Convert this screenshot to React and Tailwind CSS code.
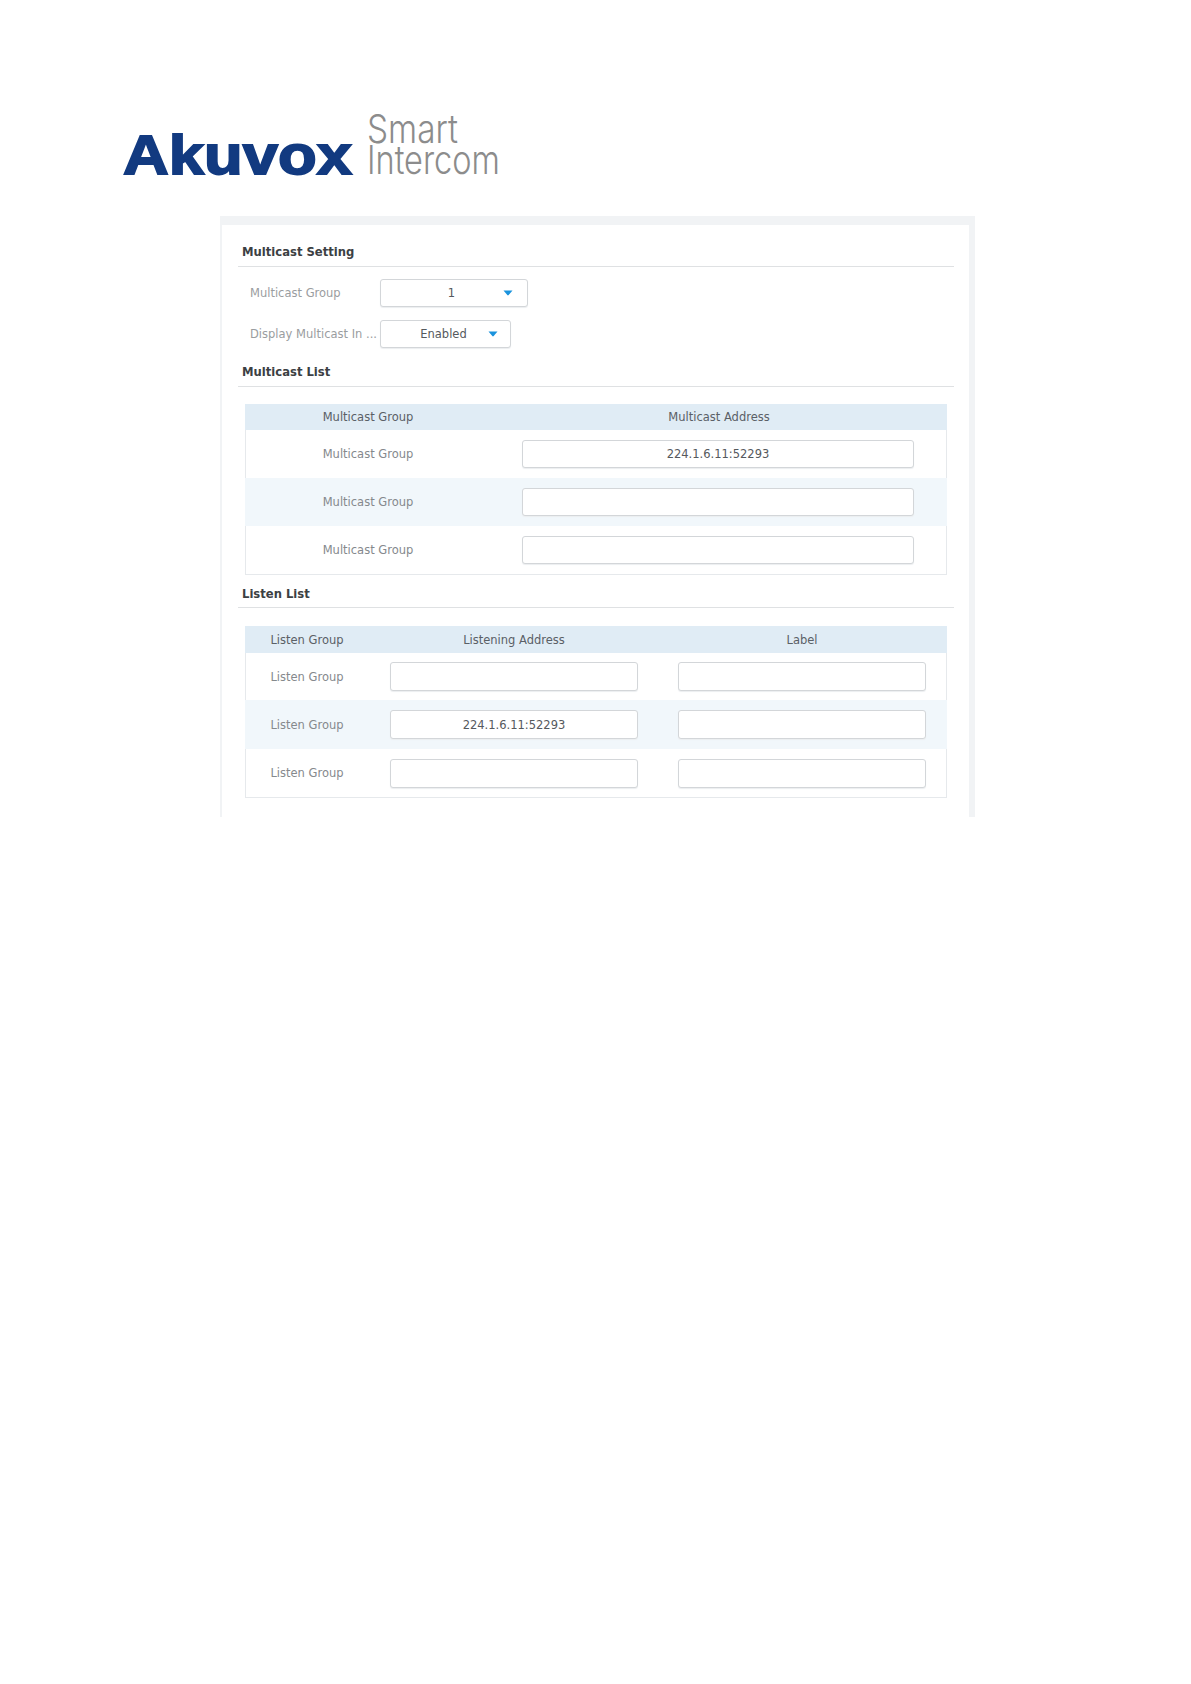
function Logo() {
  return (
    <svg width="390" height="80" viewBox="115 105 390 80" className="block ml-[115px] overflow-visible">
      <text x="123" y="174" textLength="229" lengthAdjust="spacingAndGlyphs" fontFamily="'Liberation Sans', Arial, sans-serif" fontWeight="700" fontSize="55" fill="#123a80" stroke="#123a80" strokeWidth="1.8">Akuvox</text>
      <text x="367" y="143" textLength="91" lengthAdjust="spacingAndGlyphs" fontFamily="Inter, sans-serif" fontWeight="300" fontSize="39" fill="#8c8c8c">Smart</text>
      <text x="367" y="174" textLength="133" lengthAdjust="spacingAndGlyphs" fontFamily="Inter, sans-serif" fontWeight="300" fontSize="39" fill="#8c8c8c">Intercom</text>
    </svg>
  )
}

function Heading({ children, className }) {
  return (
    <div className={`ml-4 w-[716px] border-b border-[#dfe1e3] pl-1 text-[11.6px] leading-[18px] font-bold text-[#3c4043] ${className}`}>
      {children}
    </div>
  )
}

function Caret({ className }) {
  return (
    <svg width="10" height="6" viewBox="0 0 10 6" className={`-mt-[3px] ${className}`}>
      <path d="M0.5 0.5h9l-3.8 4.6a0.9 0.9 0 0 1-1.4 0z" fill="#1b93dd" />
    </svg>
  )
}

function Campo({ children, className }) {
  return (
    <div className={`flex h-[28px] items-center justify-center rounded-[3px] border border-[#d3d6d9] bg-white pt-[2px] text-[#55595d] shadow-[0_1px_1px_#eceef0] ${className}`}>
      {children}
    </div>
  )
}

function MulticastList() {
  const enderecos = ['224.1.6.11:52293', '', '']
  return (
    <div className="ml-[23px] mt-[17px] w-[702px] border-x border-b border-[#e6e9ec]">
      <div className="-mx-px grid h-[26px] grid-cols-[246px_1fr] items-center bg-[#e0ecf5] pt-[2px] text-center text-[#5a6066]">
        <span>Multicast Group</span>
        <span>Multicast Address</span>
      </div>
      {enderecos.map((e, i) => (
        <div key={i} className={`-mx-px grid h-12 first:h-[49px] grid-cols-[246px_1fr] items-center text-center ${i === 1 ? 'bg-[#f1f7fb]' : ''}`}>
          <span className="pt-[2px] text-[#85898d]">Multicast Group</span>
          <Campo className="ml-[31px] w-[392px]">{e}</Campo>
        </div>
      ))}
    </div>
  )
}

function ListenList() {
  const linhas = ['', '224.1.6.11:52293', '']
  const alturas = ['h-[47px]', 'h-[49px]', 'h-12']
  return (
    <div className="ml-[23px] mt-[18px] w-[702px] border-x border-b border-[#e6e9ec]">
      <div className="-mx-px grid h-[27px] grid-cols-[124px_290px_286px] items-center bg-[#e0ecf5] pt-[2px] text-center text-[#5a6066]">
        <span>Listen Group</span>
        <span>Listening Address</span>
        <span>Label</span>
      </div>
      {linhas.map((l, i) => (
        <div key={i} className={`-mx-px grid grid-cols-[124px_290px_286px] items-center text-center ${alturas[i]} ${i === 1 ? 'bg-[#f1f7fb]' : ''}`}>
          <span className="pt-[2px] text-[#85898d]">Listen Group</span>
          <Campo className="ml-[21px] !h-[29px] w-[248px]">{l}</Campo>
          <Campo className="ml-[19px] !h-[29px] w-[248px]" />
        </div>
      ))}
    </div>
  )
}

export default function App() {
  return (
    <div className="min-h-[1684px] bg-white pt-[105px] font-['DejaVu_Sans',sans-serif] text-[11.5px]">
      <Logo />
      <div className="ml-[220px] mt-[31px] w-[755px] border-t-[9px] border-r-[6px] border-l-2 border-[#f1f3f5] pt-[18px] pb-[19px]">
        <Heading className="pb-[5px]">Multicast Setting</Heading>

        <div className="mt-3 flex items-center pl-[28px]">
          <span className="w-[130px] pt-[2px] text-[#9a9da0]">Multicast Group</span>
          <Campo className="w-[148px]">
            <span className="flex-1 pl-[19px] text-center">1</span>
            <Caret className="mr-[14px]" />
          </Campo>
        </div>
        <div className="mt-[13px] flex items-center pl-[28px]">
          <span className="w-[130px] whitespace-nowrap pt-[2px] text-[#9a9da0]">Display Multicast In ...</span>
          <Campo className="w-[131px]">
            <span className="flex-1 pl-[18px] text-center">Enabled</span>
            <Caret className="mr-[12px]" />
          </Campo>
        </div>

        <Heading className="mt-[15px] pb-[5px]">Multicast List</Heading>
        <MulticastList />

        <Heading className="mt-[10px] pb-1">Listen List</Heading>
        <ListenList />
      </div>
    </div>
  )
}
